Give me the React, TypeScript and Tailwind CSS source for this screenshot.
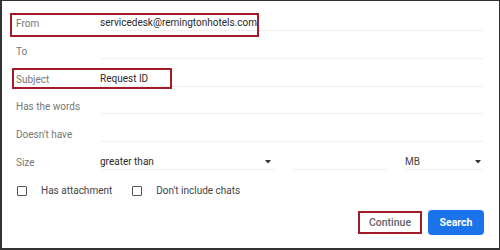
import React from "react";

const font = { fontFamily: "Roboto, 'Liberation Sans', Arial, sans-serif" };

function Caret() {
  return (
    <svg width="6" height="4" viewBox="0 0 6 4" className="shrink-0">
      <path d="M0 0 L6 0 L3 3.5 Z" fill="#333" />
    </svg>
  );
}

function Row({ label, value }: { label: string; value?: string }) {
  return (
    <div className="flex items-end h-[27.8px]">
      <div className="w-[84px] h-[14px] leading-[14px] text-[#777]">{label}</div>
      <div className="flex-1 h-[15px] leading-[14px] border-b border-[#f0f0f0] text-[#2a2a2a]">
        {value}
      </div>
    </div>
  );
}

function Checkbox({ label }: { label: string }) {
  return (
    <div className="flex items-center">
      <div className="w-[10px] h-[10px] border-[1.5px] border-[#555] rounded-[1px]" />
      <span className="ml-[14px] text-[#444] leading-[14px]">{label}</span>
    </div>
  );
}

export default function App() {
  return (
    <div
      className="relative w-[500px] h-[250px] bg-white border-t border-r border-l-2 border-b-2 border-[#333] text-[10px]"
      style={font}
    >
      <div className="pl-[14px] pr-[15px] pt-[2.2px] flex flex-col">
        <Row label="From" value="servicedesk@remingtonhotels.com" />
        <Row label="To" />
        <Row label="Subject" value="Request ID" />
        <Row label="Has the words" />
        <Row label="Doesn't have" />
        <div className="flex items-end h-[27.8px]">
          <div className="w-[84px] h-[14px] leading-[14px] text-[#777]">Size</div>
          <div className="w-[175px] h-[15px] leading-[14px] border-b border-[#f0f0f0] text-[#2a2a2a] flex items-center justify-between pr-[4px]">
            <span>greater than</span>
            <Caret />
          </div>
          <div className="ml-[17px] w-[96px] h-[15px] border-b border-[#f0f0f0]" />
          <div className="ml-[17px] flex-1 h-[15px] leading-[14px] border-b border-[#f0f0f0] text-[#444] flex items-center justify-between pr-[3px]">
            <span>MB</span>
            <Caret />
          </div>
        </div>
        <div className="mt-[16px] h-[10px] flex items-center gap-[20px] pl-[1px]">
          <Checkbox label="Has attachment" />
          <Checkbox label="Don't include chats" />
        </div>
        <div className="mt-[14px] flex justify-end items-start gap-[6px]">
          <button className="mt-[1px] w-[64px] h-[23px] border-2 border-[#a31b27] bg-white text-[#5f6368] text-[10.5px] font-medium flex items-center justify-center">
            Continue
          </button>
          <button className="w-[56px] h-[25px] rounded-[4px] bg-[#1a73e8] text-white text-[10.5px] font-bold flex items-center justify-center">
            Search
          </button>
        </div>
      </div>
      <div className="absolute left-[8px] top-[12px] w-[249px] h-[24px] border-2 border-[#a31b27] pointer-events-none" />
      <div className="absolute left-[10px] top-[67px] w-[160px] h-[21px] border-2 border-[#a31b27] pointer-events-none" />
    </div>
  );
}
